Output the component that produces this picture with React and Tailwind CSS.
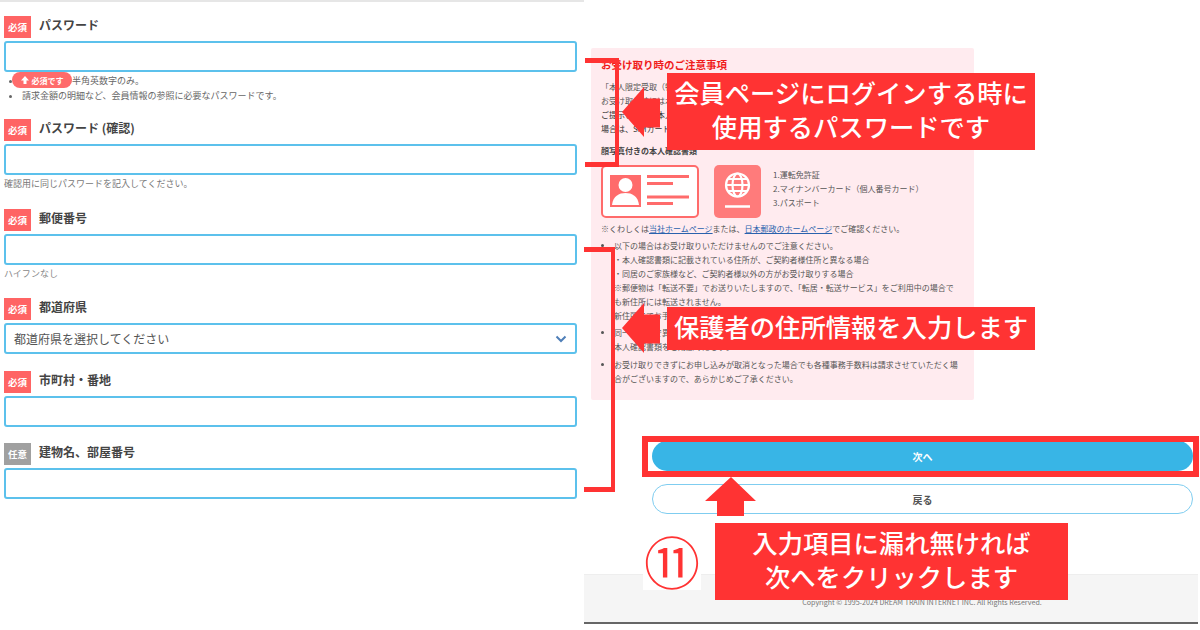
import React from "react";

function Badge({ optional }) {
  return (
    <span className={`flex h-[22px] w-[27px] shrink-0 items-center justify-center text-[9.500px] font-bold text-white ${optional ? "bg-[#a0a0a0]" : "bg-[#ff6464]"}`}>
      {optional ? "任意" : "必須"}
    </span>
  );
}

function Field({ label, optional, className, children }) {
  return (
    <div className={className}>
      <div className="flex items-center gap-2">
        <Badge optional={optional} />
        <span className="relative top-[-2px] text-[12px] font-bold leading-[22px] text-[#444]">{label}</span>
      </div>
      {children || <div className="mt-[3px] h-[31px] rounded-[3px] border-2 border-[#5cc1ec] bg-white" />}
    </div>
  );
}

function Line({ children, className = "" }) {
  return <div className={`h-[14px] whitespace-nowrap text-[8px] leading-[14px] ${className}`}>{children}</div>;
}

function IdCard() {
  return (
    <svg width="98" height="53" viewBox="0 0 98 53" className="shrink-0">
      <rect x="1" y="1" width="96" height="51" rx="4" fill="#fff" stroke="#ff6b6b" strokeWidth="2" />
      <rect x="9" y="10" width="31" height="32" fill="#ff6b6b" />
      <circle cx="24.5" cy="20" r="7" fill="#fff" />
      <path d="M11 40c1-9 7-12 13.500-12S37 31 38 40z" fill="#fff" />
      <path d="M46 11.500h42M46 18.500h26M46 32h42M46 38.500h26" stroke="#ff6b6b" strokeWidth="3" fill="none" />
    </svg>
  );
}

function Passport() {
  return (
    <svg width="47" height="53" viewBox="0 0 47 53" className="shrink-0">
      <rect width="47" height="53" rx="5" fill="#ff7b7b" />
      <g fill="none" stroke="#fff" strokeWidth="2.200">
        <circle cx="23.500" cy="20" r="11.500" />
        <ellipse cx="23.500" cy="20" rx="5" ry="11.500" />
        <path d="M12 20h23M13.500 14h20M13.500 26h20" />
      </g>
      <path d="M11 41.500h25" stroke="#fff" strokeWidth="2.500" />
    </svg>
  );
}

function ArrowLeft({ className }) {
  return (
    <svg width="38" height="50" viewBox="0 0 38 50" className={`absolute ${className}`}>
      <path d="M0 25 22 0v11.500h16v29H22V50z" fill="#ff3333" />
    </svg>
  );
}

function Callout({ className, children }) {
  return (
    <div className={`absolute flex flex-col items-center justify-center bg-[#ff3333] text-[25.300px] font-medium leading-[34px] whitespace-nowrap text-white ${className}`}>
      {children}
    </div>
  );
}

export default function App() {
  return (
    <div className="relative flex h-[630px] w-[1200px] overflow-hidden bg-white font-['Noto_Sans_CJK_JP',sans-serif] text-[#555]">
      {/* form column */}
      <div className="w-[584px] shrink-0 border-t-2 border-[#e6e6e6] pl-[4px] pr-[7px] pt-[14px]">
        <Field label="パスワード" />
        <ul className="relative mt-[1px] h-[46px] list-disc pl-[18px] text-[9px] leading-[15px] text-[#666]">
          <li className="mt-[1px]">6文字以上の半角英数字のみ。</li>
          <li>請求金額の明細など、会員情報の参照に必要なパスワードです。</li>
          <li className="absolute left-[8px] top-[-1px] flex h-[16px] w-[60px] list-none items-center justify-center gap-[3px] rounded-full bg-[#ff6b6b] text-[8px] font-bold text-white">
            <svg width="8" height="8" viewBox="0 0 8 8" fill="#fff"><path d="M4 0 8 4.500H5.500V8h-3V4.500H0z" /></svg>
            必須です
          </li>
        </ul>
        <Field label="パスワード (確認)" />
        <div className="mt-[2px] text-[9px] leading-[13px] text-[#777]">確認用に同じパスワードを記入してください。</div>
        <Field label="郵便番号" className="mt-[19px]" />
        <div className="mt-[2px] text-[9px] leading-[13px] text-[#888]">ハイフンなし</div>
        <Field label="都道府県" className="mt-[18px]">
          <div className="mt-[3px] flex h-[31px] items-center justify-between rounded-[3px] border-2 border-[#5cc1ec] bg-white pl-[8px] pr-[8px] text-[12px] text-[#555]">
            <span>都道府県を選択してください</span>
            <svg width="12" height="8" viewBox="0 0 12 8" fill="none" stroke="#4f7fb8" strokeWidth="2"><path d="M1.500 1.500 6 6l4.500-4.500" /></svg>
          </div>
        </Field>
        <Field label="市町村・番地" className="mt-[17px]" />
        <Field label="建物名、部屋番号" className="mt-[16px]" optional />
      </div>

      {/* right column */}
      <div className="flex min-w-0 flex-1 flex-col">
        <div className="ml-[7px] mt-[48px] h-[352px] w-[383px] shrink-0 rounded-[2px] bg-[#ffebef] pl-[10px] pt-[10px] text-[#555]">
          <div className="text-[10.500px] font-bold leading-[14px] text-[#f01c1c]">お受け取り時のご注意事項</div>
          <div className="mt-[8px]">
            <Line>「本人限定受取（特定事項伝達型）」にて</Line>
            <Line>お受け取り時には本人確認書類が必要です。</Line>
            <Line className="text-[#333]">ご提示いただく本人確認書類をご用意ください。</Line>
            <Line className="text-[#333]">場合は、SIMカードをお受け取りいただけません。</Line>
          </div>
          <Line className="mt-[8px] font-bold text-[#444]">顔写真付きの本人確認書類</Line>
          <div className="mt-[7px] flex items-start">
            <IdCard />
            <div className="ml-[15px]"><Passport /></div>
            <div className="ml-[12px] mt-[3px]">
              <Line>1.運転免許証</Line>
              <Line>2.マイナンバーカード（個人番号カード）</Line>
              <Line>3.パスポート</Line>
            </div>
          </div>
          <Line className="mt-[4px]">
            ※くわしくは<span className="text-[#2a62ad] underline">当社ホームページ</span>または、<span className="text-[#2a62ad] underline">日本郵政のホームページ</span>でご確認ください。
          </Line>
          <ul className="mt-[3px] list-disc whitespace-nowrap pl-[13px] text-[8px] leading-[14px]">
            <li>以下の場合はお受け取りいただけませんのでご注意ください。</li>
            <Line>・本人確認書類に記載されている住所が、ご契約者様住所と異なる場合</Line>
            <Line>・同居のご家族様など、ご契約者様以外の方がお受け取りする場合</Line>
            <Line>※郵便物は「転送不要」でお送りいたしますので、「転居・転送サービス」をご利用中の場合で</Line>
            <Line>も新住所には転送されません。</Line>
            <Line>新住所にてお手続きください。</Line>
            <li className="mt-[3px]">同一の書類で異なるお申し込みはできません。</li>
            <Line>本人確認書類をご用意ください。</Line>
            <li className="mt-[4px]">お受け取りできずにお申し込みが取消となった場合でも各種事務手数料は請求させていただく場</li>
            <Line>合がございますので、あらかじめご了承ください。</Line>
          </ul>
        </div>

        <div className="ml-[68px] mt-[41px] flex w-[541px] flex-col gap-[13px]">
          <button className="h-[30px] rounded-full bg-[#38b5e6] text-[10px] font-bold text-white">次へ</button>
          <button className="h-[30px] rounded-full border border-[#7fcdf0] bg-white text-[10px] font-bold text-[#555]">戻る</button>
        </div>

        <div className="mb-[6px] mt-[60px] flex h-[50px] w-[614px] justify-center border-t border-[#eeeeee] border-b-2 border-b-[#666] bg-[#f5f5f5] pl-[62px] pt-[21px] text-[7.100px] leading-[12px] text-[#777]">
          Copyright © 1995-2024 DREAM TRAIN INTERNET INC. All Rights Reserved.
        </div>
      </div>

      {/* annotations laid over the screenshot */}
      <div className="absolute left-[585px] top-[58px] h-[109px] w-[34px] border-y-[5px] border-r-[4px] border-[#ff3333]" />
      <div className="absolute left-[584px] top-[247px] h-[245px] w-[31px] border-y-[5px] border-r-[4px] border-[#ff3333]" />
      <ArrowLeft className="left-[622px] top-[87px]" />
      <ArrowLeft className="left-[622px] top-[303px]" />
      <Callout className="left-[667px] top-[73px] h-[77px] w-[368px] pb-[5px]">
        <div>会員ページにログインする時に</div>
        <div>使用するパスワードです</div>
      </Callout>
      <Callout className="left-[667px] top-[307px] h-[43px] w-[368px] pb-[6px]">
        <div>保護者の住所情報を入力します</div>
      </Callout>
      <div className="absolute left-[642px] top-[436px] h-[41px] w-[557px] border-[6px] border-[#ff3333]" />
      <svg width="52" height="39" viewBox="0 0 52 39" className="absolute left-[705px] top-[477px]">
        <path d="M26 0 51 24H39v15H12V24H0z" fill="#ff3333" />
      </svg>
      <Callout className="left-[715px] top-[523px] h-[77px] w-[353px] pb-[6px]">
        <div>入力項目に漏れ無ければ</div>
        <div>次へをクリックします</div>
      </Callout>
      <div className="absolute left-[643px] top-[530px] flex h-[60px] w-[58px] items-center justify-center bg-white text-[56px] leading-[60px] text-[#ff3333]">
        ⑪
      </div>
    </div>
  );
}
